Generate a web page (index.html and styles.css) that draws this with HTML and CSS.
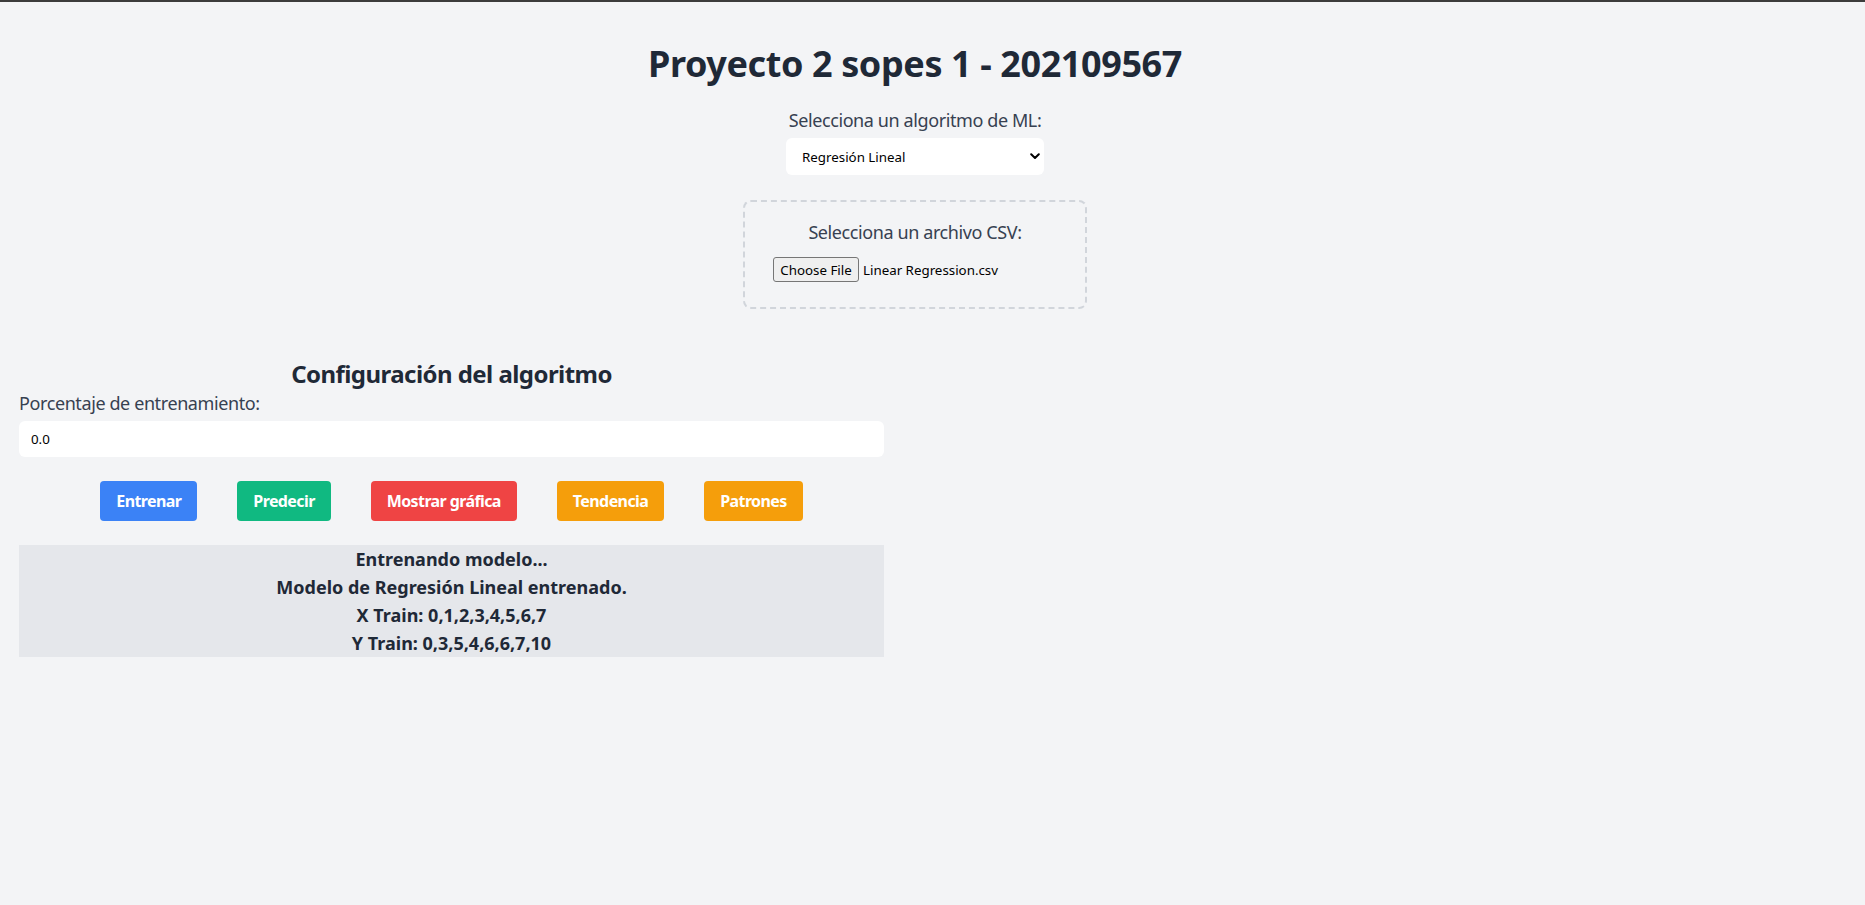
FILE: index.html
```html
<!DOCTYPE html>
<html lang="es">
<head>
<meta charset="utf-8">
<title>Proyecto 2 sopes 1</title>
<link rel="stylesheet" href="styles.css">
</head>
<body>
<div class="app">
  <h1 class="title">Proyecto 2 sopes 1 - 202109567</h1>

  <div class="algo">
    <label class="label" for="algo">Selecciona un algoritmo de ML:</label>
    <div class="select-wrap">
      <select id="algo" class="select">
        <option>Regresión Lineal</option>
        <option>Regresión Polinomial</option>
        <option>Árbol de Decisión</option>
      </select>
      <svg class="chev" width="10" height="7" viewBox="0 0 10 7"><path d="M1.2 1.2 L5 5 L8.8 1.2" fill="none" stroke="#000" stroke-width="2" stroke-linecap="round" stroke-linejoin="round"/></svg>
    </div>
  </div>

  <div class="upload">
    <div class="label upload-label">Selecciona un archivo CSV:</div>
    <label class="file-row">
      <input type="file" class="file-hidden" accept=".csv">
      <span class="file-btn">Choose File</span>
      <span class="file-name">Linear Regression.csv</span>
    </label>
  </div>

  <section class="config">
    <h2 class="config-title">Configuración del algoritmo</h2>
    <label class="label" for="pct">Porcentaje de entrenamiento:</label>
    <input id="pct" class="input" type="text" value="0.0">

    <div class="actions">
      <button class="btn btn-blue">Entrenar</button>
      <button class="btn btn-green">Predecir</button>
      <button class="btn btn-red">Mostrar gráfica</button>
      <button class="btn btn-amber">Tendencia</button>
      <button class="btn btn-amber">Patrones</button>
    </div>

    <div class="output">
      <p>Entrenando modelo...</p>
      <p>Modelo de Regresión Lineal entrenado.</p>
      <p>X Train: 0,1,2,3,4,5,6,7</p>
      <p>Y Train: 0,3,5,4,6,6,7,10</p>
    </div>
  </section>
</div>
</body>
</html>
```

FILE: styles.css
```css
* { box-sizing: border-box; }

html, body {
  margin: 0;
  padding: 0;
  background: #f3f4f6;
}

body {
  border-top: 2px solid #3c3c3c;
  font-family: "Noto Sans", "Open Sans", sans-serif;
  color: #1f2937;
  min-height: 905px;
}

.app {
  padding: 42px 54px 0 19px;
  display: flex;
  flex-direction: column;
}

.title {
  margin: 0;
  font-size: 36px;
  line-height: 40px;
  font-weight: 700;
  letter-spacing: -0.4px;
  text-align: center;
  color: #1f2937;
}

.label {
  display: block;
  font-size: 18px;
  line-height: 28px;
  letter-spacing: -0.4px;
  color: #374151;
}

.algo {
  margin-top: 22px;
  display: flex;
  flex-direction: column;
  align-items: center;
}

.select-wrap {
  position: relative;
  margin-top: 4px;
  width: 258px;
}

.select {
  appearance: none;
  -webkit-appearance: none;
  width: 258px;
  height: 37px;
  border: 0;
  border-radius: 6px;
  background: #fff;
  padding: 0 24px 0 16px;
  font-family: "Noto Sans", sans-serif;
  font-size: 13.33px;
  color: #000;
  outline: none;
}

.chev {
  position: absolute;
  right: 4px;
  top: 15px;
  pointer-events: none;
}

.upload {
  align-self: center;
  margin-top: 25px;
  width: 344px;
  border: 2px dashed #d1d5db;
  border-radius: 8px;
  padding: 16px 28px 25px;
}

.upload-label {
  text-align: center;
}

.file-row {
  margin-top: 11px;
  display: flex;
  align-items: center;
  gap: 4px;
  font-size: 13.33px;
  color: #000;
}

.file-hidden { display: none; }

.file-btn {
  display: inline-flex;
  align-items: center;
  height: 25px;
  width: 86px;
  justify-content: center;
  background: #efefef;
  border: 1px solid #767676;
  border-radius: 3px;
  color: #000;
}

.config {
  width: 865px;
  margin-top: 49px;
  display: flex;
  flex-direction: column;
}

.config-title {
  margin: 0;
  font-size: 24px;
  line-height: 32px;
  font-weight: 700;
  letter-spacing: -0.55px;
  text-align: center;
  color: #1f2937;
}

.config .label {
  margin-top: -1px;
}

.input {
  margin-top: 4px;
  height: 36px;
  width: 100%;
  border: 0;
  border-radius: 6px;
  background: #fff;
  padding: 0 12px;
  font-family: "Noto Sans", sans-serif;
  font-size: 13.33px;
  color: #000;
  outline: none;
}

.actions {
  margin-top: 24px;
  display: flex;
  justify-content: center;
  gap: 40px;
}

.btn {
  height: 40px;
  padding: 0 16px;
  border: 0;
  border-radius: 4px;
  color: #fff;
  font-family: "Noto Sans", sans-serif;
  font-size: 16px;
  font-weight: 700;
  letter-spacing: -0.6px;
  cursor: pointer;
}

.btn-blue { background: #3b82f6; }
.btn-green { background: #10b981; }
.btn-red { background: #ef4444; }
.btn-amber { background: #f59e0b; }

.output {
  margin-top: 24px;
  background: #e5e7eb;
  text-align: center;
}

.output p {
  margin: 0;
  font-size: 18px;
  line-height: 28px;
  font-weight: 700;
  color: #1f2937;
}
```
